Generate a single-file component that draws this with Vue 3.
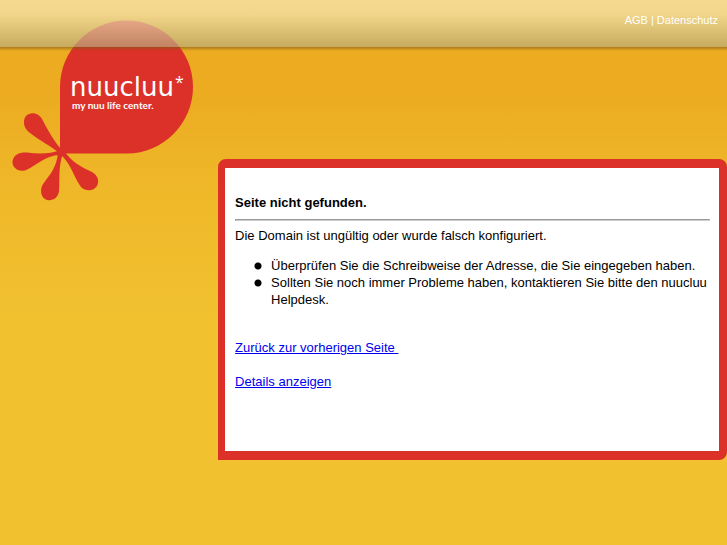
<script setup>
const hints = [
  'Überprüfen Sie die Schreibweise der Adresse, die Sie eingegeben haben.',
  'Sollten Sie noch immer Probleme haben, kontaktieren Sie bitte den nuucluu Helpdesk.',
]
</script>

<template>
  <div class="page">
    <header class="topbar">
      <nav class="links">
        <a href="#agb">AGB</a> | <a href="#datenschutz">Datenschutz</a>
      </nav>
    </header>
    <div class="columns">
      <aside class="brand">
        <svg class="logo" width="184" height="182" viewBox="10 20 184 182" role="img" aria-label="nuucluu* my nuu life center.">
          <g fill="#dc3129">
            <path d="M60 153.500V87C60 50 90 20.500 126.500 20.500C163 20.500 193 50 193 87C193 123.500 163 153.500 127 153.500Z" />
            <path d="M60 154C50 145 40 141 30 133C24 129 22 121 26 116C31 111 39 113 42 119C48 130 54 142 63 151Z" />
            <path d="M60 155C45 155 35 167 25 170.500C17 172 12 167 12.500 161C14 154 20 152 27 152.500C39 154 50 154 61 150Z" />
            <path d="M63 153C58 168 60 179 59 191C58 198 53 201 47 200C41 198 40 191 42 186C47 177 56 171 58 153Z" />
            <path d="M60 154C71 163 74 178 81 187C86 192 94 191 97 186C100 180 97 175 92 172C81 167 72 162 64 151Z" />
          </g>
          <text class="wordmark" x="70" y="96">nuucluu</text>
          <text class="star" x="175" y="88">*</text>
          <text class="tagline" x="72" y="109">my nuu life center.</text>
        </svg>
      </aside>
      <main class="panel">
        <h1>Seite nicht gefunden.</h1>
        <hr />
        <p>Die Domain ist ungültig oder wurde falsch konfiguriert.</p>
        <ul>
          <li v-for="hint in hints" :key="hint">{{ hint }}</li>
        </ul>
        <div class="actions">
          <a href="#back">Zurück zur vorherigen Seite&nbsp;</a>
          <a href="#details">Details anzeigen</a>
        </div>
      </main>
    </div>
  </div>
</template>

<style>
body {
  margin: 0;
  background: #f1c130;
}
</style>

<style scoped>
.page {
  min-height: 100vh;
  background: linear-gradient(#ecaa20 0, #ecac22 100px, #efb829 190px, #f1c130 320px);
  font-family: "Liberation Sans", Arial, sans-serif;
  font-size: 13px;
  line-height: 17px;
  color: #000;
}
.topbar {
  position: relative;
  z-index: 1;
  display: flex;
  justify-content: flex-end;
  align-items: flex-start;
  box-sizing: border-box;
  height: 47px;
  padding: 12px 9px 0;
  background: linear-gradient(rgba(250, 240, 198, 0.68), rgba(245, 234, 188, 0.68) 30%, rgba(180, 171, 125, 0.68));
}
.topbar::after {
  content: "";
  position: absolute;
  inset: 100% 0 auto;
  height: 4px;
  background: linear-gradient(rgba(130, 90, 20, 0.6), rgba(130, 90, 20, 0));
}
.links {
  font-size: 11px;
  color: #fff;
}
.links a {
  color: #fff;
  text-decoration: none;
}
.columns {
  display: grid;
  grid-template-columns: 30% minmax(0, 1fr);
  align-items: start;
}
.brand {
  margin-top: -27px;
  padding-left: 10px;
}
.logo {
  display: block;
}
.logo text {
  fill: #fff;
}
.wordmark {
  font: 26px "DejaVu Sans", sans-serif;
}
.star {
  font: 16px "Open Sans", sans-serif;
}
.tagline {
  font: 700 10px Lato, sans-serif;
}
.panel {
  margin-top: 112px;
  box-sizing: border-box;
  min-height: 301px;
  padding: 26px 9px 48px 10px;
  border: solid #dc3129;
  border-width: 9px 8px 9px 7px;
  border-radius: 8px 8px 8px 0;
  background: #fff;
  background-clip: padding-box;
}
h1 {
  margin: 0;
  font-size: 13px;
  line-height: 17px;
}
hr {
  margin: 8px 0 6px;
  border: 1px solid;
  border-color: #999 #ccc #ccc #999;
}
p {
  margin: 0;
}
ul {
  margin: 13px 0 31px;
  padding: 0;
  list-style: none;
}
li {
  padding-left: 36px;
  background: radial-gradient(circle at 23px 9px, #000 3px, transparent 4px);
}
.actions {
  display: flex;
  flex-direction: column;
  align-items: flex-start;
  gap: 17px;
}
.actions a {
  color: #00e;
  text-decoration: underline;
}
</style>
